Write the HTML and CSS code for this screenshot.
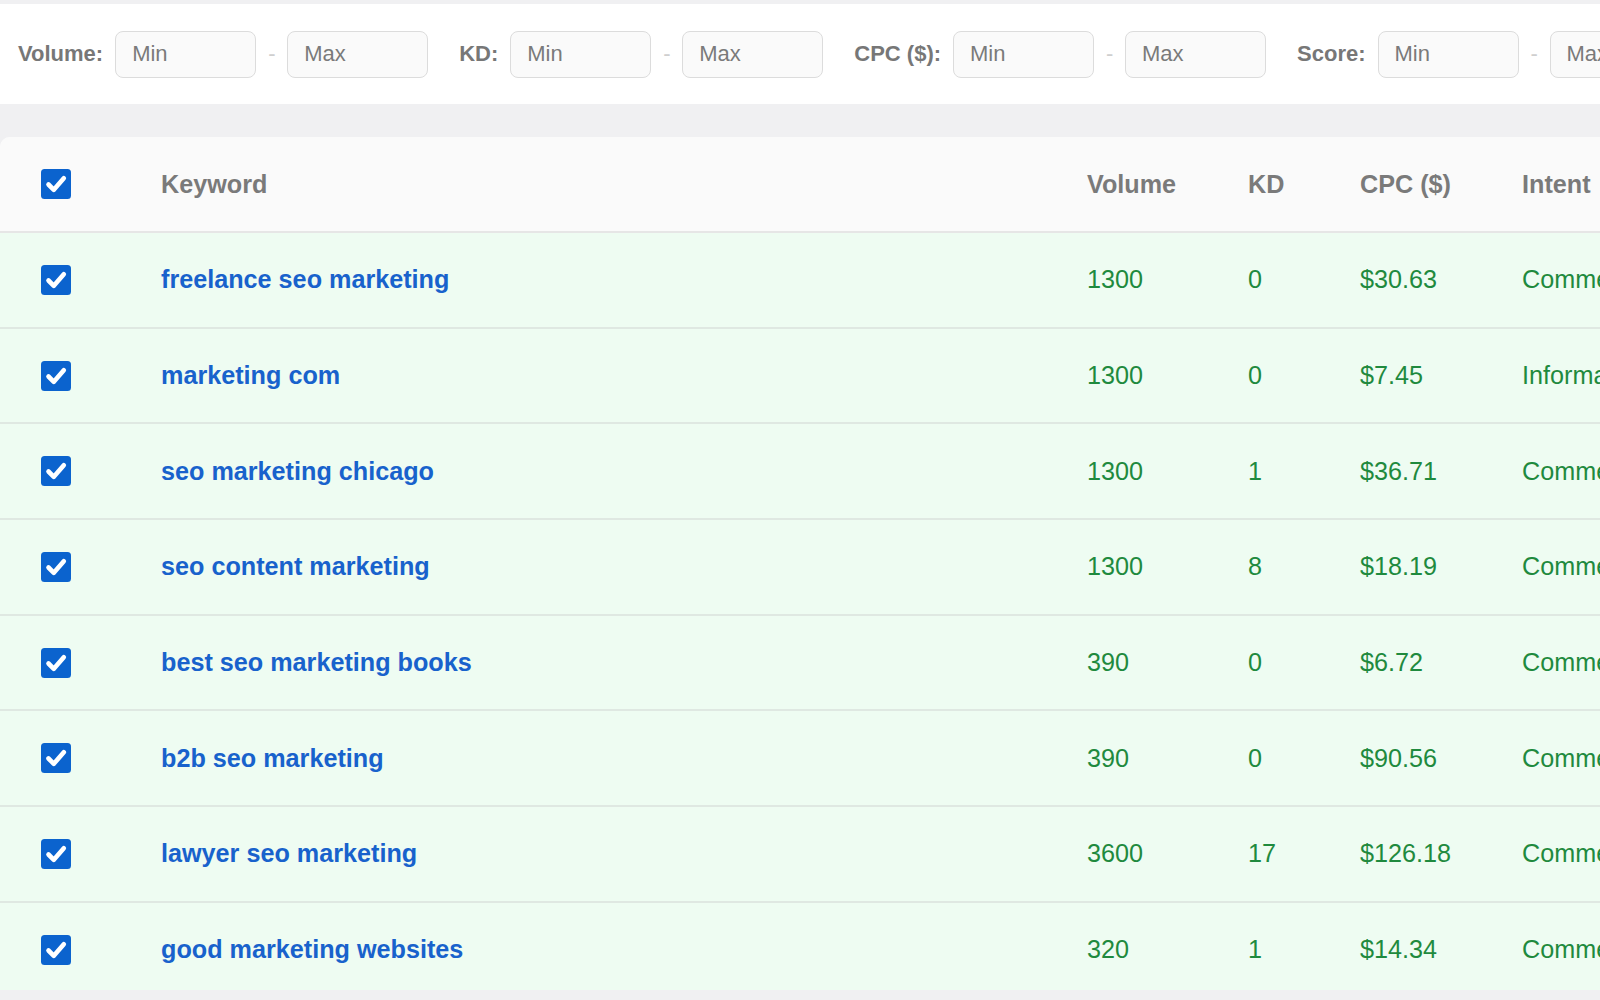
FILE: index.html
```html
<!DOCTYPE html>
<html lang="en">
<head>
<meta charset="utf-8">
<title>Keywords</title>
<link rel="stylesheet" href="styles.css">
</head>
<body>
<div class="page">
  <div class="filters">
    <div class="filter-group">
      <span class="filter-label">Volume:</span>
      <input class="filter-input" type="text" placeholder="Min">
      <span class="filter-dash">-</span>
      <input class="filter-input" type="text" placeholder="Max">
    </div>
    <div class="filter-group">
      <span class="filter-label">KD:</span>
      <input class="filter-input" type="text" placeholder="Min">
      <span class="filter-dash">-</span>
      <input class="filter-input" type="text" placeholder="Max">
    </div>
    <div class="filter-group">
      <span class="filter-label">CPC ($):</span>
      <input class="filter-input" type="text" placeholder="Min">
      <span class="filter-dash">-</span>
      <input class="filter-input" type="text" placeholder="Max">
    </div>
    <div class="filter-group">
      <span class="filter-label">Score:</span>
      <input class="filter-input" type="text" placeholder="Min">
      <span class="filter-dash">-</span>
      <input class="filter-input" type="text" placeholder="Max">
    </div>
  </div>

  <div class="table-wrap">
    <div class="row head">
      <div class="cell check"><svg class="cb" viewBox="0 0 30 30"><rect width="30" height="30" rx="3.5" fill="#0b63ce"/><path d="M7.5 15.5 L12.8 20.8 L22.8 9.2" fill="none" stroke="#fff" stroke-width="4.6" stroke-linecap="round" stroke-linejoin="round"/></svg></div>
      <div class="cell">Keyword</div>
      <div class="cell">Volume</div>
      <div class="cell">KD</div>
      <div class="cell">CPC ($)</div>
      <div class="cell">Intent</div>
    </div>

    <div class="row data">
      <div class="cell check"><svg class="cb" viewBox="0 0 30 30"><rect width="30" height="30" rx="3.5" fill="#0b63ce"/><path d="M7.5 15.5 L12.8 20.8 L22.8 9.2" fill="none" stroke="#fff" stroke-width="4.6" stroke-linecap="round" stroke-linejoin="round"/></svg></div>
      <div class="cell kw">freelance seo marketing</div>
      <div class="cell num">1300</div>
      <div class="cell num">0</div>
      <div class="cell num">$30.63</div>
      <div class="cell num">Commercial</div>
    </div>
    <div class="row data">
      <div class="cell check"><svg class="cb" viewBox="0 0 30 30"><rect width="30" height="30" rx="3.5" fill="#0b63ce"/><path d="M7.5 15.5 L12.8 20.8 L22.8 9.2" fill="none" stroke="#fff" stroke-width="4.6" stroke-linecap="round" stroke-linejoin="round"/></svg></div>
      <div class="cell kw">marketing com</div>
      <div class="cell num">1300</div>
      <div class="cell num">0</div>
      <div class="cell num">$7.45</div>
      <div class="cell num">Informational</div>
    </div>
    <div class="row data">
      <div class="cell check"><svg class="cb" viewBox="0 0 30 30"><rect width="30" height="30" rx="3.5" fill="#0b63ce"/><path d="M7.5 15.5 L12.8 20.8 L22.8 9.2" fill="none" stroke="#fff" stroke-width="4.6" stroke-linecap="round" stroke-linejoin="round"/></svg></div>
      <div class="cell kw">seo marketing chicago</div>
      <div class="cell num">1300</div>
      <div class="cell num">1</div>
      <div class="cell num">$36.71</div>
      <div class="cell num">Commercial</div>
    </div>
    <div class="row data">
      <div class="cell check"><svg class="cb" viewBox="0 0 30 30"><rect width="30" height="30" rx="3.5" fill="#0b63ce"/><path d="M7.5 15.5 L12.8 20.8 L22.8 9.2" fill="none" stroke="#fff" stroke-width="4.6" stroke-linecap="round" stroke-linejoin="round"/></svg></div>
      <div class="cell kw">seo content marketing</div>
      <div class="cell num">1300</div>
      <div class="cell num">8</div>
      <div class="cell num">$18.19</div>
      <div class="cell num">Commercial</div>
    </div>
    <div class="row data">
      <div class="cell check"><svg class="cb" viewBox="0 0 30 30"><rect width="30" height="30" rx="3.5" fill="#0b63ce"/><path d="M7.5 15.5 L12.8 20.8 L22.8 9.2" fill="none" stroke="#fff" stroke-width="4.6" stroke-linecap="round" stroke-linejoin="round"/></svg></div>
      <div class="cell kw">best seo marketing books</div>
      <div class="cell num">390</div>
      <div class="cell num">0</div>
      <div class="cell num">$6.72</div>
      <div class="cell num">Commercial</div>
    </div>
    <div class="row data">
      <div class="cell check"><svg class="cb" viewBox="0 0 30 30"><rect width="30" height="30" rx="3.5" fill="#0b63ce"/><path d="M7.5 15.5 L12.8 20.8 L22.8 9.2" fill="none" stroke="#fff" stroke-width="4.6" stroke-linecap="round" stroke-linejoin="round"/></svg></div>
      <div class="cell kw">b2b seo marketing</div>
      <div class="cell num">390</div>
      <div class="cell num">0</div>
      <div class="cell num">$90.56</div>
      <div class="cell num">Commercial</div>
    </div>
    <div class="row data">
      <div class="cell check"><svg class="cb" viewBox="0 0 30 30"><rect width="30" height="30" rx="3.5" fill="#0b63ce"/><path d="M7.5 15.5 L12.8 20.8 L22.8 9.2" fill="none" stroke="#fff" stroke-width="4.6" stroke-linecap="round" stroke-linejoin="round"/></svg></div>
      <div class="cell kw">lawyer seo marketing</div>
      <div class="cell num">3600</div>
      <div class="cell num">17</div>
      <div class="cell num">$126.18</div>
      <div class="cell num">Commercial</div>
    </div>
    <div class="row data">
      <div class="cell check"><svg class="cb" viewBox="0 0 30 30"><rect width="30" height="30" rx="3.5" fill="#0b63ce"/><path d="M7.5 15.5 L12.8 20.8 L22.8 9.2" fill="none" stroke="#fff" stroke-width="4.6" stroke-linecap="round" stroke-linejoin="round"/></svg></div>
      <div class="cell kw">good marketing websites</div>
      <div class="cell num">320</div>
      <div class="cell num">1</div>
      <div class="cell num">$14.34</div>
      <div class="cell num">Commercial</div>
    </div>
  </div>
</div>
</body>
</html>
```

FILE: styles.css
```css
html, body {
  margin: 0;
  padding: 0;
}

body {
  width: 1600px;
  height: 1000px;
  overflow: hidden;
  background: #f0f0f2;
  font-family: "Liberation Sans", Arial, sans-serif;
}

.page {
  padding-top: 4px;
}

.filters {
  height: 100px;
  background: #ffffff;
  display: flex;
  align-items: center;
  gap: 31px;
  padding-left: 18px;
  overflow: hidden;
  white-space: nowrap;
}

.filter-group {
  display: flex;
  align-items: center;
  gap: 12px;
  flex-shrink: 0;
}

.filter-label {
  font-size: 22px;
  font-weight: 700;
  color: #777777;
}

.filter-input {
  box-sizing: border-box;
  width: 141px;
  height: 47px;
  margin: 0;
  padding: 0 0 0 16px;
  border: 1px solid #dcdcdc;
  border-radius: 8px;
  background: #fafafa;
  font-family: "Liberation Sans", Arial, sans-serif;
  font-size: 22px;
  color: #555555;
  outline: none;
}

.filter-input::placeholder {
  color: #7a7a7a;
  opacity: 1;
}

.filter-dash {
  font-size: 22px;
  color: #cfcfcf;
  width: 7px;
  text-align: center;
}

.table-wrap {
  margin-top: 33px;
  height: 853px;
  overflow: hidden;
  border-radius: 10px 0 0 0;
  background: #fafafa;
}

.row {
  display: grid;
  grid-template-columns: 161px 926px 161px 112px 162px 1fr;
  align-items: center;
  box-sizing: border-box;
  white-space: nowrap;
}

.cell {
  font-size: 25.2px;
}

.check {
  padding-left: 41px;
  display: flex;
  align-items: center;
}

.cb {
  width: 30px;
  height: 30px;
  display: block;
}

.head {
  height: 96px;
  background: #fafafa;
  border-bottom: 2px solid #e6e6e6;
}

.head .cell {
  font-weight: 700;
  color: #7a7a7a;
}

.data {
  height: 95.7px;
  background: #eefcf2;
  border-bottom: 2px solid #dfe8e2;
}

.kw {
  font-weight: 700;
  color: #1862cc;
}

.num {
  color: #1f8a3e;
}
```
